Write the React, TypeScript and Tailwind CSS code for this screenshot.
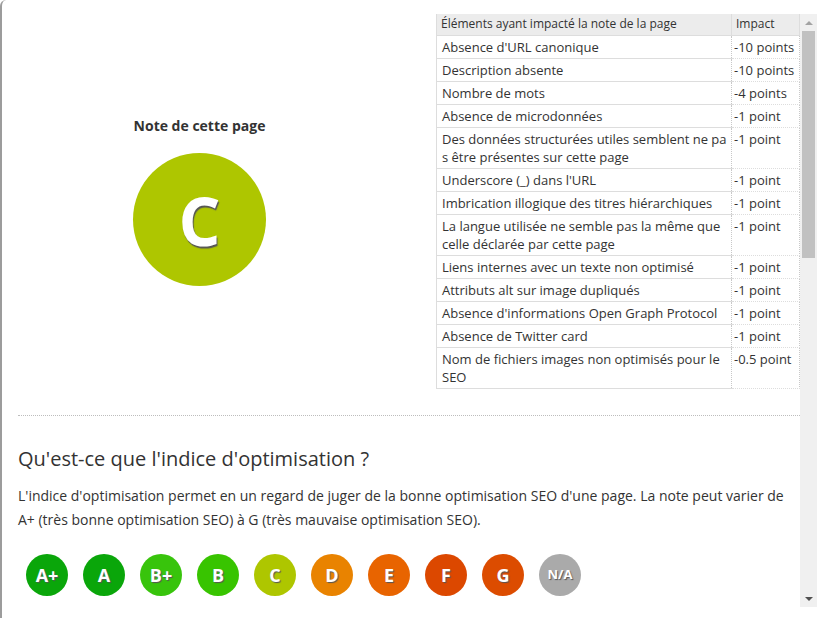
const rows = [
  { label: "Absence d'URL canonique", impact: "-10 points" },
  { label: "Description absente", impact: "-10 points" },
  { label: "Nombre de mots", impact: "-4 points" },
  { label: "Absence de microdonnées", impact: "-1 point" },
  { label: "Des données structurées utiles semblent ne pa s être présentes sur cette page", impact: "-1 point" },
  { label: "Underscore (_) dans l'URL", impact: "-1 point" },
  { label: "Imbrication illogique des titres hiérarchiques", impact: "-1 point" },
  { label: "La langue utilisée ne semble pas la même que celle déclarée par cette page", impact: "-1 point" },
  { label: "Liens internes avec un texte non optimisé", impact: "-1 point" },
  { label: "Attributs alt sur image dupliqués", impact: "-1 point" },
  { label: "Absence d'informations Open Graph Protocol", impact: "-1 point" },
  { label: "Absence de Twitter card", impact: "-1 point" },
  { label: "Nom de fichiers images non optimisés pour le SEO", impact: "-0.5 point" },
];

const grades = [
  { g: "A+", bg: "bg-[#0aa60a]" },
  { g: "A", bg: "bg-[#0aa60a]" },
  { g: "B+", bg: "bg-[#38c40c]" },
  { g: "B", bg: "bg-[#38c400]" },
  { g: "C", bg: "bg-[#aec600]" },
  { g: "D", bg: "bg-[#e98300]" },
  { g: "E", bg: "bg-[#e86400]" },
  { g: "F", bg: "bg-[#dc4800]" },
  { g: "G", bg: "bg-[#dc4c00]" },
  { g: "N/A", bg: "bg-[#aaaaaa]" },
];

function Scrollbar() {
  return (
    <div className="w-[17px] h-full bg-[#f0f0f0] flex flex-col items-center">
      <div className="h-[17px] flex items-center justify-center">
        <div className="w-0 h-0 border-l-[4px] border-r-[4px] border-b-[4px] border-l-transparent border-r-transparent border-b-[#a3a3a3]" />
      </div>
      <div className="w-[13px] h-[227px] bg-[#c1c1c1]" />
      <div className="flex-1" />
      <div className="h-[17px] flex items-center justify-center">
        <div className="w-0 h-0 border-l-[4px] border-r-[4px] border-t-[4px] border-l-transparent border-r-transparent border-t-[#505050]" />
      </div>
    </div>
  );
}

export default function App() {
  return (
    <div
      className="w-[823px] h-[618px] bg-white border-l-2 border-[#9c9c9c] rounded-tl-[6px] overflow-hidden text-[#333]"
      style={{ fontFamily: "'Open Sans', 'Liberation Sans', sans-serif" }}
    >
      <div className="pt-[14px] flex h-[607px]">
        <div className="w-[798px] overflow-hidden">
          <div className="flex items-center">
            <div className="w-[396px] flex flex-col items-center">
              <div className="text-[14px] font-bold leading-[20px] text-[#333]">Note de cette page</div>
              <div className="mt-[17px] w-[133px] h-[133px] rounded-full bg-[#aec600] flex items-center justify-center">
                <span
                  className="text-white font-bold text-[66px] leading-none"
                  style={{ textShadow: "1px 2px 1px #555" }}
                >
                  C
                </span>
              </div>
            </div>
            <table className="ml-[39px] w-[363px] border-collapse table-fixed text-[13px] leading-[18px] text-[#333]">
              <colgroup>
                <col className="w-[295px]" />
                <col className="w-[68px]" />
              </colgroup>
              <thead>
                <tr className="bg-[#ececec] text-[12px]">
                  <th className="font-normal text-left h-[21px] pl-[4px] py-0 border-l border-b border-r border-[#ddd]">
                    Éléments ayant impacté la note de la page
                  </th>
                  <th className="font-normal text-left pl-[4px] py-0 border-b border-r border-[#ddd]">Impact</th>
                </tr>
              </thead>
              <tbody>
                {rows.map((r) => (
                  <tr key={r.label}>
                    <td className="align-top pl-[5px] pr-[3px] py-[2px] border-l border-b border-[#ddd]">{r.label}</td>
                    <td className="align-top pl-[2px] py-[2px] whitespace-nowrap border-b border-[#ddd] border-l border-l-[#c8c8c8] border-dotted border-r border-r-[#c8c8c8]">
                      {r.impact}
                    </td>
                  </tr>
                ))}
              </tbody>
            </table>
          </div>

          <div className="mt-[26px] ml-[16px] border-t border-dotted border-[#bdbdbd]" />

          <div className="px-[16px]">
            <h2 className="mt-[29px] text-[20px] leading-[27px] font-normal text-[#333]">
              Qu'est-ce que l'indice d'optimisation ?
            </h2>
            <p className="mt-[12px] text-[14px] leading-[24px] text-[#333]">
              L'indice d'optimisation permet en un regard de juger de la bonne optimisation SEO d'une page. La note peut varier de A+ (très bonne optimisation SEO) à G (très mauvaise optimisation SEO).
            </p>
            <div className="mt-[22px] pl-[8px] flex gap-[15px]">
              {grades.map((x) => (
                <div
                  key={x.g}
                  className={`w-[42px] h-[42px] rounded-full ${x.bg} flex items-center justify-center`}
                >
                  <span
                    className={`text-white font-bold leading-none ${x.g === "N/A" ? "text-[13px]" : "text-[18px]"}`}
                    style={{ textShadow: "1px 1px 1px #555" }}
                  >
                    {x.g}
                  </span>
                </div>
              ))}
            </div>
          </div>
        </div>
        <Scrollbar />
      </div>
    </div>
  );
}
